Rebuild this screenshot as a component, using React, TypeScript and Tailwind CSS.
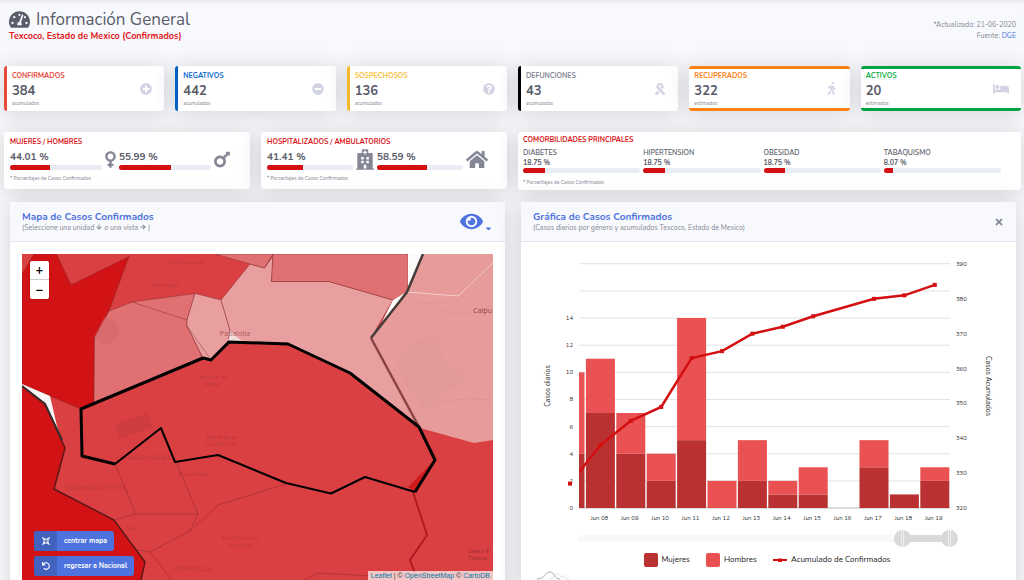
import { useState } from 'react'
import type { ReactNode } from 'react'
import {
  FaArrowDown,
  FaArrowRight,
  FaBed,
  FaCaretDown,
  FaCompressArrowsAlt,
  FaEye,
  FaHome,
  FaHospital,
  FaMars,
  FaMinusCircle,
  FaPlusCircle,
  FaQuestionCircle,
  FaRibbon,
  FaTachometerAlt,
  FaTimes,
  FaUndo,
  FaVenus,
  FaWalking,
} from 'react-icons/fa'

const totals = [
  { label: 'CONFIRMADOS', value: 384, note: 'acumulados', icon: FaPlusCircle, border: 'border-l-3 border-[#e74a3b]', color: 'text-[#e74a3b]', size: 'text-[12px]' },
  { label: 'NEGATIVOS', value: 442, note: 'acumulados', icon: FaMinusCircle, border: 'border-l-3 border-[#0061c2]', color: 'text-[#0b68cf]', size: 'text-[12px]' },
  { label: 'SOSPECHOSOS', value: 136, note: 'acumulados', icon: FaQuestionCircle, border: 'border-l-3 border-[#f6b92c]', color: 'text-[#f6c23e]', size: 'text-[12px]' },
  { label: 'DEFUNCIONES', value: 43, note: 'acumulados', icon: FaRibbon, border: 'border-l-3 border-black', color: 'text-[#858796]', size: 'text-[12px]' },
  { label: 'RECUPERADOS', value: 322, note: 'estimados', icon: FaWalking, border: 'border-y-3 border-[#fd8114]', color: 'text-[#fd7e14]', size: 'text-[13px]' },
  { label: 'ACTIVOS', value: 20, note: 'estimados', icon: FaBed, border: 'border-y-3 border-[#00a443]', color: 'text-[#0fae4b]', size: 'text-[16px]' },
]

const comorbidities = [
  { label: 'DIABETES', value: 18.75 },
  { label: 'HIPERTENSION', value: 18.75 },
  { label: 'OBESIDAD', value: 18.75 },
  { label: 'TABAQUISMO', value: 8.07 },
]

const days = [
  { day: 'Jun 07', women: 4, men: 6, total: 327 },
  { day: 'Jun 08', women: 7, men: 4, total: 338 },
  { day: 'Jun 09', women: 4, men: 3, total: 345 },
  { day: 'Jun 10', women: 2, men: 2, total: 349 },
  { day: 'Jun 11', women: 5, men: 9, total: 363 },
  { day: 'Jun 12', women: 0, men: 2, total: 365 },
  { day: 'Jun 13', women: 2, men: 3, total: 370 },
  { day: 'Jun 14', women: 1, men: 1, total: 372 },
  { day: 'Jun 15', women: 1, men: 2, total: 375 },
  { day: 'Jun 16', women: 0, men: 0, total: null },
  { day: 'Jun 17', women: 3, men: 2, total: 380 },
  { day: 'Jun 18', women: 1, men: 0, total: 381 },
  { day: 'Jun 19', women: 2, men: 1, total: 384 },
]

const cardShadow = 'shadow-[0_2px_22px_rgba(58,59,69,0.2)]'

function Progress({ value, label }: { value: number; label: string }) {
  return (
    <div
      role="progressbar"
      aria-label={label}
      aria-valuenow={value}
      className="h-[5px] overflow-hidden rounded-full bg-[#eaecf4]"
    >
      <div className="h-full bg-[#d40f12]" style={{ width: `${value}%` }} />
    </div>
  )
}

interface SplitCardProps {
  title: string
  barWidth: string
  items: { value: number; icon: ReactNode }[]
}

function SplitCard({ title, barWidth, items }: SplitCardProps) {
  return (
    <section className={`h-[57px] rounded-[3px] bg-white px-[6px] pt-[5px] ${cardShadow}`}>
      <h2 className="text-[7px] leading-[10px] font-bold text-[#d8171a]">{title}</h2>
      <div className="mt-[2px] flex gap-[3px]">
        {items.map((item) => (
          <div key={item.value} className="flex items-center gap-[3px]">
            <div className={barWidth}>
              <p className="text-[10px] leading-[16px] font-bold text-[#5a5c69]">{item.value} %</p>
              <Progress value={item.value} label={title} />
            </div>
            {item.icon}
          </div>
        ))}
      </div>
      <p className="mt-[5px] text-[5px] leading-[7px] text-[#858796]">* Porcentajes de Casos Confirmados</p>
    </section>
  )
}

function MapDrawing() {
  return (
    <svg viewBox="22 254 471 326" preserveAspectRatio="xMidYMid slice" className="block size-full" aria-label="Mapa">
      <rect x="22" y="254" width="471" height="326" fill="#da4042" />
      <g stroke="#7a2a2c" strokeOpacity="0.45" strokeWidth="1" strokeLinejoin="round">
        <path d="M34 254H56.500L71 285L129 256.500L109 311L94.500 338L94 403L81 409L50 396L22 384V274Z" fill="#d11315" />
        <path d="M109 311L132 302L195 293.500L187 320V326L203 359L94 402L94.500 338Z" fill="#e07071" />
        <path d="M195 293.500L221 300L230 330L228 341L211 359L203 358L187 326V320Z" fill="#e99fa0" />
        <path d="M221 300L250 264L264.500 268L273 256L271.500 281.500H329L393 300L371 338L419 427L350 373L288 343H229L230 330Z" fill="#e99fa0" />
        <path d="M215 254H273L264.500 268L250 264Z" fill="#e07071" />
        <path d="M273 254H408V292L393 300L329 281.500H271.500Z" fill="#e07071" />
        <path d="M132 302L187 320M187 326L209 357M129 256.500L131 254" fill="none" />
      </g>
      <path d="M230 331L243 342H228Z" fill="#f3dcdc" />
      <path d="M408 254H423L407 293L376 334L393 300L408 291Z" fill="#fbfbf9" />
      <path d="M423 254H493V440L474 443L420 428L371 338L407 292Z" fill="#e79b9b" />
      <path d="M404 348Q420 334 442 339Q438 356 452 366Q468 370 466 380Q440 392 425 412L403 380Q392 360 404 348Z" fill="#df9791" opacity="0.3" />
      <path d="M410 300Q440 308 450 300T493 265M440 310Q470 320 493 305M420 410Q450 395 493 400" fill="none" stroke="#d98f90" strokeOpacity="0.5" />
      <path d="M407 292L458 296L493 263" fill="none" stroke="#f3cfcf" strokeWidth="1" />
      <path d="M423 254L407 292L371 338" fill="none" stroke="#453c3a" strokeWidth="2.500" />
      <path d="M371 338L419 427" fill="none" stroke="#8c4346" strokeWidth="2.500" />
      <path d="M22 384L50 396L57 426L62 443L45 404L22 386Z" fill="#f8f6f4" />
      <path d="M22 386L45 404L65 448L54 489L114 520L145 562L141 580H22Z" fill="#d11315" />
      <path d="M22 386L45 404L65 448L54 489L114 520L145 562L141 580" fill="none" stroke="#5c1516" strokeWidth="1.500" />
      <path d="M22 386L45 404L62 440" fill="none" stroke="#3a2a2a" strokeWidth="2" />
      <g fill="none" stroke="#9a2c2f" strokeOpacity="0.6" strokeWidth="1">
        <path d="M115 464L136 514H198L176 462M114 520L136 514M198 514L190 531L150 552L134 549" />
        <path d="M190 531L218 505L286 484M150 552L172 580M304 580L318 573L370 576" />
      </g>
      <path d="M434 461L408 487L415 492Z" fill="#cf1a1c" />
      <path d="M413 492L427 535L410 560L416 576" fill="none" stroke="#b01c20" strokeWidth="2" />
      <path d="M115 424L148 413L153 427L119 439Z" fill="#c73a3d" opacity="0.6" />
      <path d="M94 338L104 318A13 13 0 1 1 94 336Z" fill="#d3686a" opacity="0.6" />
      <g fill="#7d2529" fillOpacity="0.35" fontSize="6" textAnchor="middle" fontFamily="'Open Sans', sans-serif">
        <text x="187" y="264">Nexquipayac</text>
        <text x="165" y="287">Tepexpan</text>
        <text x="235" y="336" fontSize="7" fillOpacity="0.6">Papalotla</text>
        <text x="212" y="379">Texcoco de</text>
        <text x="212" y="386">Mora</text>
        <text x="221" y="439">San Miguel</text>
        <text x="221" y="446">Coatlinchan</text>
        <text x="195" y="476">Cuautlalpan</text>
        <text x="143" y="460" fontSize="7">CHIMALHUACÁN</text>
        <text x="95" y="490" fontSize="7">NEZAHUALCÓYOTL</text>
        <text x="132" y="530">Paz</text>
        <text x="240" y="540">San Francisco</text>
        <text x="240" y="547">Acuautla</text>
        <text x="192" y="571" fontSize="7">IXTAPALUCA</text>
        <text x="492" y="313" textAnchor="end" fontSize="7" fillOpacity="0.8">Calpu</text>
        <text x="468" y="553" textAnchor="start" fillOpacity="0.7">Santa R</text>
        <text x="468" y="560" textAnchor="start" fillOpacity="0.7">Tlahua</text>
      </g>
      <g fill="none" stroke="#000" strokeLinejoin="round">
        <path d="M115 464L82 456L81 409L203 358L211 360L229 342L288 344L350 373L419 427L435 460L415 492" strokeWidth="3" />
        <path d="M415 492L365 477L331 493.500L286 483L218 455L175 462L161 428L115 464" strokeWidth="2" />
      </g>
    </svg>
  )
}

const BASE = 276
const UNIT = 13.57
const xOf = (i: number) => 37 + i * 30.4
const yOf = (total: number) => BASE - (total - 320) * 3.486

function CasesChart() {
  const points = days
    .map((d, i) => ({ x: xOf(i), total: d.total }))
    .filter((p): p is { x: number; total: number } => p.total !== null)
    .map((p) => ({ x: p.x, y: yOf(p.total) }))

  return (
    <svg viewBox="0 0 471 300" className="block w-full" fontFamily="Nunito, 'Open Sans', sans-serif" fill="#333">
      <clipPath id="plot">
        <rect x="46" y="20" width="372" height="257" />
      </clipPath>
      {Array.from({ length: 10 }, (_, i) => (
        <g key={i}>
          <line x1="46" x2="417" y1={BASE - i * 2 * UNIT} y2={BASE - i * 2 * UNIT} stroke={i === 0 ? '#bbb' : '#e3e3e3'} />
          {i < 8 && (
            <text x="40" y={BASE - i * 2 * UNIT + 2} fontSize="6" textAnchor="end">{i * 2}</text>
          )}
        </g>
      ))}
      {Array.from({ length: 8 }, (_, i) => (
        <text key={i} x="423" y={BASE - i * 34.86 + 2} fontSize="6">{320 + i * 10}</text>
      ))}
      <g clipPath="url(#plot)">
        {days.map((d, i) => (
          <g key={d.day}>
            <rect x={xOf(i) - 14.5} width="29" y={BASE - d.women * UNIT} height={d.women * UNIT} fill="#b93231" />
            <rect x={xOf(i) - 14.5} width="29" y={BASE - (d.women + d.men) * UNIT} height={d.men * UNIT} fill="#ea5153" />
          </g>
        ))}
        <polyline points={points.map((p) => `${p.x},${p.y}`).join(' ')} fill="none" stroke="#d40f12" strokeWidth="2.5" />
      </g>
      {points.map((p) => (
        <rect key={p.x} x={p.x - 2} y={p.y - 2} width="4" height="4" fill="#d40f12" />
      ))}
      {days.slice(1).map((d, i) => (
        <text key={d.day} x={xOf(i + 1) - 1} y={BASE + 12} fontSize="6" textAnchor="middle">{d.day}</text>
      ))}
      <text transform="translate(17 154) rotate(-90)" fontSize="7" textAnchor="middle">Casos diarios</text>
      <text transform="translate(453 154) rotate(90)" fontSize="7" textAnchor="middle">Casos Acumulados</text>
    </svg>
  )
}

const rangeClass =
  'pointer-events-none absolute inset-x-0 top-0 h-[17px] w-full appearance-none bg-transparent [&::-webkit-slider-thumb]:pointer-events-auto [&::-webkit-slider-thumb]:appearance-none [&::-webkit-slider-thumb]:size-[17px] [&::-webkit-slider-thumb]:rounded-full [&::-webkit-slider-thumb]:bg-[#d9d9d9] [&::-webkit-slider-thumb]:bg-[linear-gradient(90deg,transparent_7px,#eee_7px,#eee_8px,transparent_8px,transparent_9px,#eee_9px,#eee_10px,transparent_10px)]'

export default function App() {
  const [from, setFrom] = useState(873)
  const [to, setTo] = useState(1000)

  return (
    <div className="h-screen overflow-hidden bg-[#f8f9fc] font-[Nunito,'Open_Sans',sans-serif] text-[#858796] shadow-[inset_0_4px_4px_-3px_rgba(58,59,69,0.12)]">
      <header className="flex h-[66px] justify-between pl-[9px] pr-2 pt-[9px]">
        <div>
          <h1 className="flex items-center gap-[6px] text-[17px] leading-[21px] text-[#5a5c69]">
            <FaTachometerAlt className="text-[21px]" />
            Información General
          </h1>
          <p className="text-[9px] leading-[12px] font-bold text-[#e0181b]">Texcoco, Estado de Mexico (Confirmados)</p>
        </div>
        <div className="pt-[10px] text-right text-[7px] leading-[11px]">
          <p>*Actualizado: 21-06-2020</p>
          <p>
            Fuente: <a href="#dge" className="text-[#4e73df]">DGE</a>
          </p>
        </div>
      </header>

      <main>
        <div className="grid grid-cols-6 gap-[11px] pl-1 pr-[3px]">
          {totals.map((t) => (
            <section
              key={t.label}
              className={`flex h-[45px] items-center justify-between rounded-[3px] bg-white pl-[5px] pr-[12px] ${t.border} ${cardShadow}`}
            >
              <div>
                <h2 className={`text-[7px] leading-[10px] font-bold ${t.color}`}>{t.label}</h2>
                <p className="text-[13px] leading-[20px] font-bold text-[#5a5c69]">{t.value}</p>
                <p className="text-[5px] leading-[5px]">{t.note}</p>
              </div>
              <t.icon className={`${t.size} text-[#d1d3e2]`} />
            </section>
          ))}
        </div>

        <div className="mt-[21px] grid grid-cols-4 gap-[11px] pl-1 pr-[3px]">
          <SplitCard
            title="MUJERES / HOMBRES"
            barWidth="w-[92px]"
            items={[
              { value: 44.01, icon: <FaVenus className="h-[19px] w-[11px]" /> },
              { value: 55.99, icon: <FaMars className="h-[21px] w-[16px]" /> },
            ]}
          />
          <SplitCard
            title="HOSPITALIZADOS / AMBULATORIOS"
            barWidth="w-[86px]"
            items={[
              { value: 41.41, icon: <FaHospital className="h-[21px] w-[18px]" /> },
              { value: 58.59, icon: <FaHome className="h-[21px] w-[22px]" /> },
            ]}
          />
          <section className={`col-span-2 h-[58px] rounded-[3px] bg-white pl-[5px] pr-5 pt-[3px] ${cardShadow}`}>
            <h2 className="text-[7px] leading-[10px] font-bold text-[#d8171a]">COMORBILIDADES PRINCIPALES</h2>
            <div className="mt-[2px] grid grid-cols-4 gap-[3px]">
              {comorbidities.map((c) => (
                <div key={c.label}>
                  <h3 className="text-[7px] leading-[11px] font-semibold text-[#5a5c69]">{c.label}</h3>
                  <p className="text-[7px] leading-[10px] font-bold text-[#5a5c69]">{c.value} %</p>
                  <Progress value={c.value} label={c.label} />
                </div>
              ))}
            </div>
            <p className="mt-[6px] text-[5px] leading-[7px]">* Porcentajes de Casos Confirmados</p>
          </section>
        </div>

        <div className="mt-[12px] grid grid-cols-2 gap-4 pl-[10px] pr-2">
          <section className={`rounded-[3px] bg-white ${cardShadow}`}>
            <div className="flex h-10 items-center justify-between border-b border-[#e3e6f0] bg-[#f8f9fc] px-3">
              <div>
                <h2 className="text-[10px] leading-[11px] font-bold text-[#4e73df]">Mapa de Casos Confirmados</h2>
                <p className="flex items-center gap-[2px] text-[7px] leading-[9px]">
                  (Seleccione una unidad <FaArrowDown className="text-[6px]" /> o una vista <FaArrowRight className="text-[6px]" />)
                </p>
              </div>
              <button type="button" aria-label="Vista" className="flex items-end gap-px text-[#4e73df]">
                <FaEye className="text-[23px]" />
                <FaCaretDown className="text-[9px]" />
              </button>
            </div>
            <div className="p-3">
              <div className="relative h-[326px] overflow-hidden">
                <MapDrawing />
                <div className="absolute left-[8px] top-[7px] flex flex-col rounded-[2px] bg-white text-[13px] font-bold text-black shadow">
                  <button type="button" aria-label="Acercar" className="h-[19px] w-[19px] border-b border-[#ccc] leading-[18px]">+</button>
                  <button type="button" aria-label="Alejar" className="h-[19px] w-[19px] leading-[18px]">−</button>
                </div>
                <div className="absolute left-[12px] top-[277px] flex flex-col items-start gap-[5px] text-[7px] font-bold text-white">
                  <button type="button" className="flex h-5 items-center overflow-hidden rounded-[3px] bg-[#4e73df]">
                    <span className="flex h-full w-[23px] items-center justify-center bg-[#4262bf] text-[8px]"><FaCompressArrowsAlt /></span>
                    <span className="px-[7px]">centrar mapa</span>
                  </button>
                  <button type="button" className="flex h-5 items-center overflow-hidden rounded-[3px] bg-[#4e73df]">
                    <span className="flex h-full w-[23px] items-center justify-center bg-[#4262bf] text-[8px]"><FaUndo /></span>
                    <span className="px-[7px]">regresar a Nacional</span>
                  </button>
                </div>
                <p className="absolute bottom-0 right-0 bg-white/70 px-[3px] font-['Liberation_Sans',sans-serif] text-[7px] leading-[9px] text-[#333]">
                  <a href="#leaflet" className="text-[#0078a8]">Leaflet</a> | © <a href="#osm" className="text-[#0078a8]">OpenStreetMap</a> © <a href="#carto" className="text-[#0078a8]">CartoDB</a>
                </p>
              </div>
            </div>
          </section>

          <section className={`rounded-[3px] bg-white ${cardShadow}`}>
            <div className="flex h-10 items-center justify-between border-b border-[#e3e6f0] bg-[#f8f9fc] px-3">
              <div>
                <h2 className="text-[10px] leading-[11px] font-bold text-[#4e73df]">Gráfica de Casos Confirmados</h2>
                <p className="text-[7px] leading-[9px]">(Casos diarios por género y acumulados Texcoco, Estado de Mexico)</p>
              </div>
              <button type="button" aria-label="Cerrar" className="text-[10px]"><FaTimes /></button>
            </div>
            <div className="px-3">
              <div className="-mt-[10px]">
                <CasesChart />
              </div>
              <div className="relative ml-[37px] mr-[46px] -mt-[2px] h-[17px]">
                <div className="absolute inset-x-2 top-[5px] h-[7px] rounded-full bg-[#f8f8f8]" />
                <div className="absolute inset-x-2 top-[5px] h-[7px]">
                  <div className="h-full bg-[#d9d9d9]" style={{ marginLeft: `${from / 10}%`, width: `${(to - from) / 10}%` }} />
                </div>
                <input type="range" aria-label="Desde" min={0} max={1000} value={from} onChange={(e) => setFrom(Math.min(Number(e.target.value), to))} className={rangeClass} />
                <input type="range" aria-label="Hasta" min={0} max={1000} value={to} onChange={(e) => setTo(Math.max(Number(e.target.value), from))} className={rangeClass} />
              </div>
              <div className="flex items-start">
                <svg viewBox="0 0 34 12" className="ml-[3px] mt-[22px] h-3 w-[34px] shrink-0" fill="none">
                  <path d="M14 10C18 10 18 5 21 5S24 8 25 8S27 6 28 7S29 10 33 10" stroke="#ddd" />
                  <path d="M1 10C9 10 9 3 14 3S17 10 24 10" stroke="#aaa" />
                </svg>
                <div className="flex flex-1 items-center justify-center gap-4 pr-[40px] pt-[6px] text-[8px] leading-[14px] text-[#222]">
                  <span className="flex items-center gap-[4px]"><i className="size-[14px] rounded-[2px] bg-[#b93231]" />Mujeres</span>
                  <span className="flex items-center gap-[4px]"><i className="size-[14px] rounded-[2px] bg-[#ea5153]" />Hombres</span>
                  <span className="flex items-center gap-[4px]">
                    <svg viewBox="0 0 14 6" className="h-[6px] w-[14px]" fill="#d40f12">
                      <path d="M0 2H14V4H0ZM5 1.500H9V5H5Z" />
                    </svg>
                    Acumulado de Confirmados
                  </span>
                </div>
              </div>
            </div>
          </section>
        </div>
      </main>
    </div>
  )
}
